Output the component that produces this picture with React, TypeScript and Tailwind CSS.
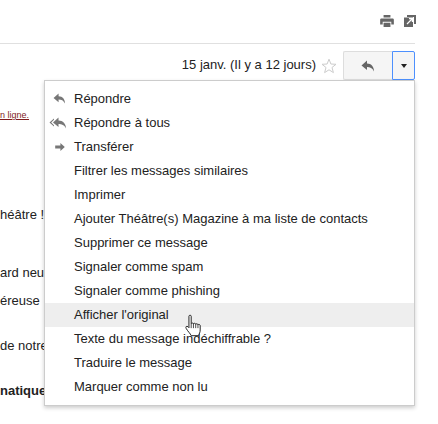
const items = [
  "Répondre",
  "Répondre à tous",
  "Transférer",
  "Filtrer les messages similaires",
  "Imprimer",
  "Ajouter Théâtre(s) Magazine à ma liste de contacts",
  "Supprimer ce message",
  "Signaler comme spam",
  "Signaler comme phishing",
  "Afficher l'original",
  "Texte du message indéchiffrable ?",
  "Traduire le message",
  "Marquer comme non lu",
]

function ReplyIcon({ className }: { className?: string }) {
  return (
    <svg viewBox="0 0 14 12" className={className} fill="currentColor">
      <path d="M6 0.5 L0.5 5.5 L6 10 L6 7 C9 7 11.5 8 13 11.5 C13 7 10.5 3.5 6 3.5 Z" />
    </svg>
  )
}

function ReplyAllIcon({ className }: { className?: string }) {
  return (
    <svg viewBox="0 0 18 12" className={className} fill="currentColor">
      <path d="M9.5 0.5 L4 5.5 L9.5 10 L9.5 7 C12.5 7 15.5 8 17 11.5 C17 7 14 3.5 9.5 3.5 Z" />
      <path d="M5 1.5 L0.5 5.5 L5 9.5 L5 8.3 L2.2 5.5 L5 2.7 Z" />
    </svg>
  )
}

function ForwardIcon({ className }: { className?: string }) {
  return (
    <svg viewBox="0 0 12 10" className={className} fill="currentColor">
      <path d="M0 3 H6.5 V0 L12 5 L6.5 10 V7 H0 Z" />
    </svg>
  )
}

function MenuIcon({ index }: { index: number }) {
  if (index === 0) return <ReplyIcon className="h-[11px] w-[13px] text-[#777]" />
  if (index === 1) return <ReplyAllIcon className="ml-[-4px] h-[12px] w-[18px] text-[#777]" />
  if (index === 2) return <ForwardIcon className="h-[8px] w-[10px] text-[#777]" />
  return null
}

function HandCursor() {
  return (
    <svg viewBox="0 0 20 26" className="absolute left-[184px] top-[314px] h-[23px] w-[18px]" preserveAspectRatio="none">
      <path
        d="M5.5 2.5 C5.5 1 8 1 8 2.5 V11 C8 10 10.5 10 10.5 11.2 C10.5 10.2 13 10.2 13 11.6 C13 10.8 15.5 10.8 15.5 12.2 C15.5 11.6 18 11.6 18 13 V18 C18 21 17 22 16 24.5 H8 C7 22 4.5 20 2.5 16.5 C1.2 14.5 3 13 4.5 14.5 L5.5 15.5 Z"
        fill="#fff"
        stroke="#222"
        strokeWidth="1.1"
        strokeLinejoin="round"
      />
      <path d="M8 11 V16 M10.5 11 V16 M13 11.6 V16 M15.5 12.2 V16" stroke="#222" strokeWidth="0.9" fill="none" />
    </svg>
  )
}

export default function App() {
  return (
    <div className="relative h-[424px] w-[438px] overflow-hidden bg-white font-['Liberation_Sans',Arial,sans-serif] text-[13px] text-[#222]">
      {/* top toolbar */}
      <div className="flex h-[43px] items-start justify-end gap-[10px] pr-[22px] pt-[15px] text-[#666]">
        <svg viewBox="0 0 16 14" className="h-[12px] w-[14px]" fill="currentColor">
          <path d="M4 0 H12 V3 H4 Z M1.5 4 H14.5 C15.5 4 16 4.7 16 5.5 V11 H13 V8 H3 V11 H0 V5.5 C0 4.7 0.5 4 1.5 4 Z M4 9 H12 V14 H4 Z" />
        </svg>
        <svg viewBox="0 0 12 12" className="h-[12px] w-[12px]">
          <path d="M0 2.5 H9 V12 H0 Z" fill="#666" />
          <path d="M3 0 H12 V9 H10 V2 H3 Z" fill="#666" />
          <path d="M3 9 L8 4 M5 3.6 H8.4 V7" stroke="#fff" strokeWidth="1.2" fill="none" />
        </svg>
      </div>
      <div className="mr-[23px] h-[1px] bg-[#e0e0e0]" />

      {/* date row */}
      <div className="mr-[23px] mt-[7px] flex h-[29px] items-center justify-end">
        <span className="pb-[2px] text-[13px] text-[#222]">15 janv. (Il y a 12 jours)</span>
        <svg viewBox="0 0 16 16" className="ml-[5px] mr-[6px] h-[16px] w-[16px]" fill="none" stroke="#ccc" strokeWidth="1">
          <path d="M8 1.2 L9.9 6 L15 6.3 L11 9.5 L12.4 14.6 L8 11.8 L3.6 14.6 L5 9.5 L1 6.3 L6.1 6 Z" />
        </svg>
        <button className="flex h-[29px] w-[49px] items-center justify-center rounded-l-[2px] border border-r-0 border-[#ddd] bg-[#f5f5f5] text-[#666]">
          <ReplyIcon className="h-[12px] w-[14px]" />
        </button>
        <button className="flex h-[29px] w-[23px] items-center justify-center rounded-r-[2px] border border-[#4d90fe] bg-[#f5f5f5]">
          <span className="h-0 w-0 border-x-[3.5px] border-t-[4px] border-x-transparent border-t-[#222]" />
        </button>
      </div>

      {/* message body, mostly covered by the menu */}
      <div className="w-[44px] whitespace-nowrap text-[13px] text-[#222]">
        <div className="mt-[29px] text-[9px] leading-[12px] text-[#7f1d1d] underline">n ligne.</div>
        <div className="mt-[87px] leading-[14px]">héâtre !</div>
        <div className="mt-[44px] leading-[14px]">ard neu</div>
        <div className="mt-[14px] leading-[14px]">éreuse</div>
        <div className="mt-[31px] leading-[14px]">de notre</div>
        <div className="mt-[31px] font-bold leading-[14px]">natique</div>
      </div>

      {/* dropdown menu */}
      <div className="absolute left-[44px] top-[80px] w-[371px] border border-[#ccc] bg-white py-[6px] shadow-[0_2px_4px_rgba(0,0,0,0.2)]">
        {items.map((label, i) => (
          <div
            key={label}
            className={`flex h-[24px] items-center ${i === 9 ? "bg-[#eeeeee]" : ""}`}
          >
            <span className="flex w-[29px] items-center justify-center pb-[1px]">
              <MenuIcon index={i} />
            </span>
            <span className="pb-[2px] text-[13px] leading-none text-[#222]">{label}</span>
          </div>
        ))}
      </div>

      <HandCursor />
    </div>
  )
}
